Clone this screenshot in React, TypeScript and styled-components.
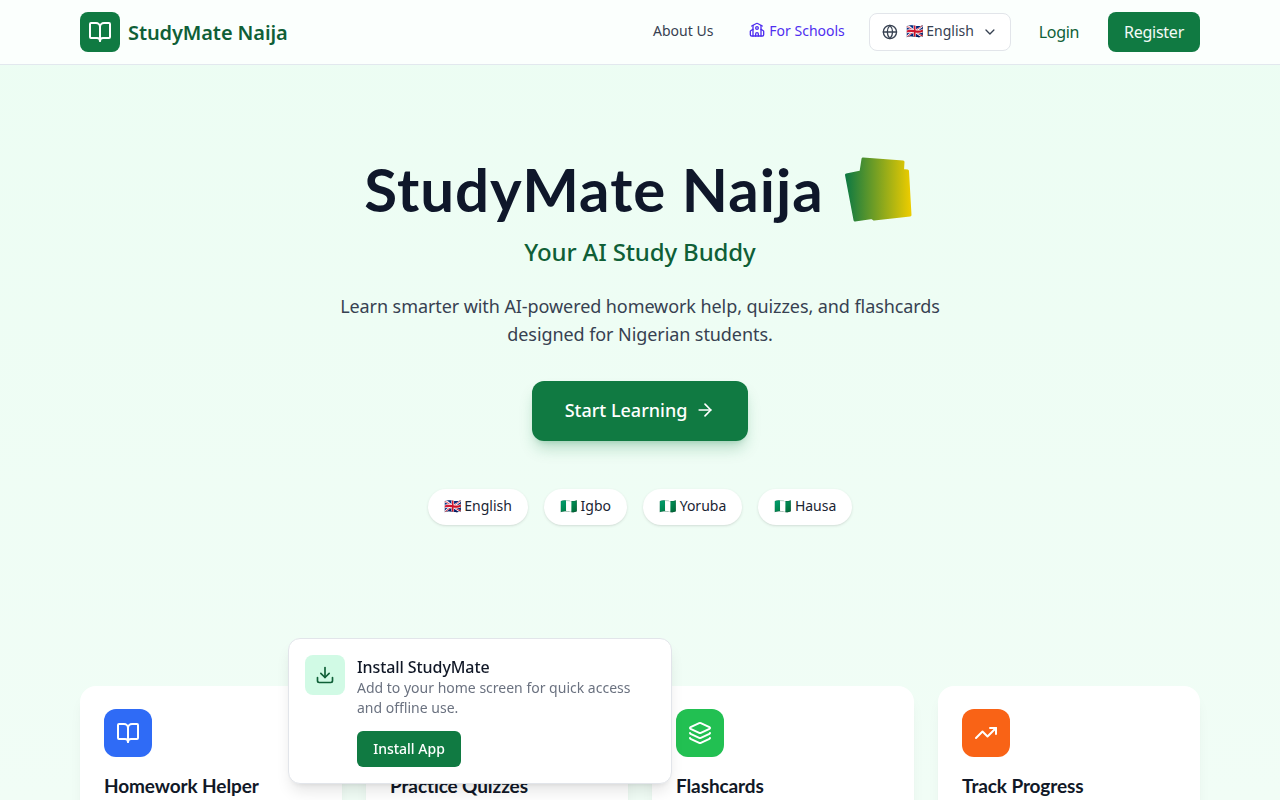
import React from 'react'
import styled, { createGlobalStyle } from 'styled-components'
import { ArrowRight, BookOpen, ChevronDown, Download, Globe, Layers, School, TrendingUp } from 'lucide-react'

const GlobalStyle = createGlobalStyle`
  html, body {
    margin: 0;
    padding: 0;
    height: 100%;
    overflow: hidden;
    background: #f0fdf4;
  }
  * {
    box-sizing: border-box;
    letter-spacing: -0.0055em;
  }
  body {
    font-family: 'Noto Sans', 'Open Sans', sans-serif;
    color: #111827;
  }
`

const Page = styled.div`
  height: 800px;
  overflow: hidden;
  background: linear-gradient(180deg, #ecfdf3 0%, #f1fdf6 100%);
`

const Header = styled.header`
  height: 65px;
  background: #fbfffd;
  border-bottom: 1px solid #e2e8ee;
  padding: 0 80px;
  display: flex;
  align-items: center;
  justify-content: space-between;
`

const Brand = styled.div`
  display: flex;
  align-items: center;
  gap: 8px;
`

const BrandMark = styled.div`
  width: 40px;
  height: 40px;
  border-radius: 8px;
  background: #107a42;
  color: #fff;
  display: flex;
  align-items: center;
  justify-content: center;
`

const BrandName = styled.span`
  font-size: 20px;
  font-weight: 600;
  color: #0f5f37;
`

const Nav = styled.nav`
  display: flex;
  align-items: center;
`

const NavLink = styled.a<{ $accent?: boolean }>`
  display: flex;
  align-items: center;
  gap: 4px;
  padding-bottom: 4px;
  font-size: 14px;
  letter-spacing: 0;
  color: ${({ $accent }) => ($accent ? '#4f2ff0' : '#374151')};
  margin-right: ${({ $accent }) => ($accent ? '24px' : '36px')};
`

const LangSelect = styled.div`
  width: 142px;
  height: 38px;
  border: 1px solid #e2e5ea;
  border-radius: 8px;
  background: #fff;
  display: flex;
  align-items: center;
  padding: 0 12px;
  gap: 8px;
  font-size: 14px;
  color: #374151;
  margin-right: 28px;
`

const LangLabel = styled.span`
  flex: 1;
  white-space: nowrap;
  padding-bottom: 4px;
  letter-spacing: 0;
`

const LoginLink = styled.a`
  font-size: 16px;
  letter-spacing: -0.35px;
  color: #0f5f37;
  margin-right: 29px;
`

const RegisterButton = styled.button`
  width: 92px;
  height: 40px;
  border: none;
  border-radius: 8px;
  background: #107a42;
  color: #f4fbf7;
  font: inherit;
  font-size: 16px;
  letter-spacing: -0.25px;
`

const Hero = styled.section`
  display: flex;
  flex-direction: column;
  align-items: center;
  padding-top: 84px;
`

const TitleRow = styled.div`
  display: flex;
  align-items: center;
  gap: 20px;
  height: 80px;
  margin-left: -4px;
`

const Title = styled.h1`
  margin: 0;
  font-family: 'Lato', 'Noto Sans', sans-serif;
  font-size: 60px;
  font-weight: 700;
  line-height: 80px;
  letter-spacing: 1px;
  color: #0f172a;
`

const Subtitle = styled.h2`
  margin: 7px 0 0;
  font-size: 24px;
  line-height: 32px;
  font-weight: 500;
  color: #0f5f37;
`

const Lead = styled.p`
  margin: 24px 0 0;
  width: 672px;
  text-align: center;
  font-size: 18px;
  line-height: 28px;
  letter-spacing: -0.08px;
  color: #374151;
`

const StartButton = styled.button`
  margin-top: 33px;
  width: 216px;
  height: 60px;
  padding: 0 0 2px;
  border: none;
  border-radius: 12px;
  background: #107a42;
  color: #fff;
  font: inherit;
  font-size: 18px;
  font-weight: 500;
  letter-spacing: 0;
  display: flex;
  align-items: center;
  justify-content: center;
  gap: 8px;
  box-shadow: 0 10px 15px -3px rgba(16, 122, 66, 0.25), 0 4px 6px -4px rgba(16, 122, 66, 0.25);
`

const PillRow = styled.div`
  margin-top: 48px;
  display: flex;
  gap: 16px;
`

const Pill = styled.span`
  height: 36px;
  padding: 0 16px 4px;
  border-radius: 999px;
  background: #fff;
  font-size: 14px;
  letter-spacing: 0;
  color: #1a2433;
  display: flex;
  align-items: center;
  box-shadow: 0 1px 3px rgba(0, 0, 0, 0.1), 0 1px 2px -1px rgba(0, 0, 0, 0.1);
`

const CardGrid = styled.section`
  margin-top: 161px;
  padding: 0 80px;
  display: grid;
  grid-template-columns: repeat(4, 1fr);
  gap: 24px;
`

const Card = styled.article`
  height: 200px;
  border-radius: 16px;
  background: #fff;
  padding: 23px 24px;
  box-shadow: 0 10px 15px -3px rgba(0, 0, 0, 0.05), 0 4px 6px -4px rgba(0, 0, 0, 0.05);
`

const CardIcon = styled.div<{ $bg: string }>`
  width: 48px;
  height: 48px;
  border-radius: 12px;
  background: ${({ $bg }) => $bg};
  color: #fff;
  display: flex;
  align-items: center;
  justify-content: center;
`

const CardTitle = styled.h3`
  margin: 15px 0 0;
  font-family: 'Lato', 'Noto Sans', sans-serif;
  font-size: 19px;
  line-height: 28px;
  font-weight: 700;
  color: #111827;
`

const InstallCard = styled.aside`
  position: fixed;
  left: 288px;
  bottom: 16px;
  width: 384px;
  height: 146px;
  padding: 16px;
  display: flex;
  gap: 12px;
  border: 1px solid #e2e5ea;
  border-radius: 12px;
  background: #fff;
  box-shadow: 0 10px 15px -3px rgba(0, 0, 0, 0.1), 0 4px 6px -4px rgba(0, 0, 0, 0.1);
`

const InstallIcon = styled.div`
  flex: none;
  width: 40px;
  height: 40px;
  border-radius: 8px;
  background: #d1fae5;
  color: #0f5f37;
  display: flex;
  align-items: center;
  justify-content: center;
`

const InstallBody = styled.div`
  display: flex;
  flex-direction: column;
  align-items: flex-start;
`

const InstallTitle = styled.div`
  font-size: 16px;
  line-height: 24px;
  font-weight: 500;
  color: #111827;
`

const InstallText = styled.div`
  margin-top: -1px;
  font-size: 14px;
  line-height: 20px;
  letter-spacing: 0;
  color: #6b7280;
`

const InstallButton = styled.button`
  margin-top: 13px;
  width: 104px;
  height: 36px;
  padding: 0 0 2px;
  border: none;
  border-radius: 6px;
  background: #107a42;
  color: #fff;
  font: inherit;
  font-size: 14px;
  font-weight: 500;
  letter-spacing: 0;
`

function StudyCards() {
  return (
    <svg width="68" height="66" viewBox="0 0 68 66">
      <defs>
        <linearGradient id="cardsFill" x1="0" x2="1" y1="0" y2="0">
          <stop offset="0" stopColor="#107a42" />
          <stop offset="1" stopColor="#eacb00" />
        </linearGradient>
      </defs>
      <path
        d="M2.5 19 L17 16 L19 3 L59 6 L58.5 14.5 L63.5 15 L66 59 L30 63 L28 61.5 L11 64 Z"
        fill="url(#cardsFill)"
        stroke="url(#cardsFill)"
        strokeWidth="3"
        strokeLinejoin="round"
      />
    </svg>
  )
}

const features = [
  { title: 'Homework Helper', color: '#2f6bf6', Icon: BookOpen },
  { title: 'Practice Quizzes', color: '#a855f7', Icon: BookOpen },
  { title: 'Flashcards', color: '#22c052', Icon: Layers },
  { title: 'Track Progress', color: '#f96316', Icon: TrendingUp },
]

export default function App() {
  return (
    <Page>
      <GlobalStyle />
      <Header>
        <Brand>
          <BrandMark>
            <BookOpen size={24} />
          </BrandMark>
          <BrandName>StudyMate Naija</BrandName>
        </Brand>
        <Nav>
          <NavLink>About Us</NavLink>
          <NavLink $accent>
            <School size={16} />
            For Schools
          </NavLink>
          <LangSelect>
            <Globe size={16} />
            <LangLabel>🇬🇧 English</LangLabel>
            <ChevronDown size={16} />
          </LangSelect>
          <LoginLink>Login</LoginLink>
          <RegisterButton>Register</RegisterButton>
        </Nav>
      </Header>
      <Hero>
        <TitleRow>
          <Title>StudyMate Naija</Title>
          <StudyCards />
        </TitleRow>
        <Subtitle>Your AI Study Buddy</Subtitle>
        <Lead>Learn smarter with AI-powered homework help, quizzes, and flashcards designed for Nigerian students.</Lead>
        <StartButton>
          Start Learning
          <ArrowRight size={20} />
        </StartButton>
        <PillRow>
          <Pill>🇬🇧 English</Pill>
          <Pill>🇳🇬 Igbo</Pill>
          <Pill>🇳🇬 Yoruba</Pill>
          <Pill>🇳🇬 Hausa</Pill>
        </PillRow>
      </Hero>
      <CardGrid>
        {features.map(({ title, color, Icon }) => (
          <Card key={title}>
            <CardIcon $bg={color}>
              <Icon size={24} />
            </CardIcon>
            <CardTitle>{title}</CardTitle>
          </Card>
        ))}
      </CardGrid>
      <InstallCard>
        <InstallIcon>
          <Download size={20} />
        </InstallIcon>
        <InstallBody>
          <InstallTitle>Install StudyMate</InstallTitle>
          <InstallText>Add to your home screen for quick access and offline use.</InstallText>
          <InstallButton>Install App</InstallButton>
        </InstallBody>
      </InstallCard>
    </Page>
  )
}
